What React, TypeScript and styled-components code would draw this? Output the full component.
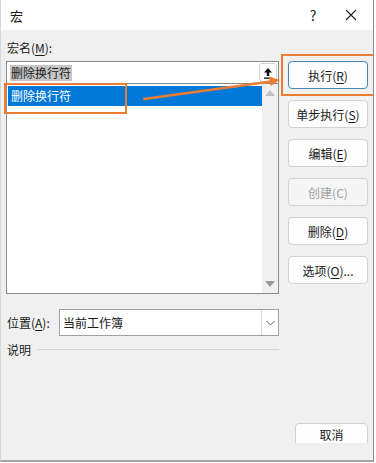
import React from "react";
import styled, { createGlobalStyle } from "styled-components";

const Global = createGlobalStyle`
  html, body { margin: 0; padding: 0; background: #ffffff; }
  body { font-family: "Noto Sans CJK SC", "Noto Sans", sans-serif; font-size: 12px; color: #1a1a1a; }
  * { box-sizing: border-box; }
`;

const Window = styled.div`
  position: relative;
  width: 374px;
  height: 462px;
  background: #f0f0f0;
  border-left: 1px solid #d8d8d8;
  border-right: 1px solid #8c8c8c;
  border-bottom: 2px solid #a6a6a6;
  overflow: hidden;
  display: flex;
  flex-direction: column;
`;

const TitleBar = styled.div`
  height: 30px;
  background: #ffffff;
  display: flex;
  align-items: center;
  padding-left: 9px;
  font-size: 13px;
`;

const Title = styled.div`
  flex: 1;
`;

const TitleButton = styled.div<{ $w: number }>`
  width: ${(p) => p.$w}px;
  display: flex;
  justify-content: center;
  align-items: center;
  font-size: 14px;
  color: #222;
`;

const Body = styled.div`
  flex: 1;
  display: flex;
  padding: 10px 0 0 5px;
`;

const LeftCol = styled.div`
  width: 273px;
  display: flex;
  flex-direction: column;
`;

const Label = styled.div`
  height: 16px;
  line-height: 16px;
  padding-left: 1px;
  font-size: 12px;
`;

const U = styled.span`
  text-decoration: underline;
  text-underline-offset: 2px;
`;

const NameBox = styled.div`
  margin-top: 5px;
  height: 22px;
  background: #fff;
  border: 1px solid #8a8a8a;
  border-bottom: none;
  display: flex;
  align-items: center;
  padding-left: 3px;
`;

const Selected = styled.span`
  line-height: 16px;
  flex: 1;
  display: flex;
`;

const SelText = styled.span`
  background: #c6c6c6;
  padding: 0 1px;
`;

const UpButton = styled.div`
  width: 18px;
  height: 19px;
  margin-right: 1px;
  border: 1px solid #d4d4d4;
  border-radius: 3px;
  background: #fdfdfd;
  display: flex;
  align-items: center;
  justify-content: center;
`;

const ListBox = styled.div`
  height: 211px;
  background: #fff;
  border: 1px solid #8a8a8a;
  display: flex;
`;

const ListItems = styled.div`
  flex: 1;
  padding: 2px 0 0 1px;
`;

const Item = styled.div<{ $sel?: boolean }>`
  height: 20px;
  line-height: 20px;
  padding-left: 3px;
  background: ${(p) => (p.$sel ? "#0078d7" : "transparent")};
  color: ${(p) => (p.$sel ? "#fff" : "#1a1a1a")};
`;

const ScrollBar = styled.div`
  width: 16px;
  background: #f0f0f0;
  display: flex;
  flex-direction: column;
  justify-content: space-between;
  align-items: center;
  padding: 6px 0 6px;
`;

const Tri = styled.div<{ $down?: boolean }>`
  width: 0;
  height: 0;
  border-left: 5px solid transparent;
  border-right: 5px solid transparent;
  ${(p) =>
    p.$down ? "border-top: 6px solid #9a9a9a;" : "border-bottom: 6px solid #c2c2c2;"}
`;

const PosRow = styled.div`
  margin-top: 15px;
  display: flex;
  align-items: center;
`;

const PosLabel = styled.div`
  width: 53px;
  padding-left: 1px;
`;

const Combo = styled.div`
  flex: 1;
  height: 27px;
  background: #fff;
  border: 1px solid #a0a0a0;
  display: flex;
  align-items: center;
`;

const ComboText = styled.div`
  flex: 1;
  padding-left: 3px;
`;

const ComboArrow = styled.div`
  width: 17px;
  height: 100%;
  border-left: 1px solid #dcdcdc;
  display: flex;
  align-items: center;
  justify-content: center;
`;

const DescRow = styled.div`
  margin-top: 5px;
  display: flex;
  align-items: center;
  gap: 6px;
  padding-left: 1px;
`;

const Rule = styled.div`
  flex: 1;
  height: 1px;
  background: #d6d6d6;
`;

const RightCol = styled.div`
  margin-left: 9px;
  width: 80px;
  display: flex;
  flex-direction: column;
  padding-top: 21px;
  gap: 11px;
`;

const Btn = styled.div<{ $default?: boolean; $disabled?: boolean }>`
  height: 28px;
  border-radius: 4px;
  border: 1px solid ${(p) => (p.$default ? "#4a86b4" : "#d2d2d2")};
  background: ${(p) => (p.$disabled ? "#f5f5f5" : "#fdfdfd")};
  color: ${(p) => (p.$disabled ? "#a2a2a2" : "#1a1a1a")};
  display: flex;
  align-items: center;
  justify-content: center;
  font-size: 12px;
`;

const Spacer = styled.div`
  flex: 1;
`;

const CancelWrap = styled.div`
  height: 20px;
  margin: 0 0 17px 7px;
  width: 73px;
  overflow: hidden;
`;

const CancelBtn = styled.div`
  height: 28px;
  border-radius: 4px;
  border: 1px solid #d2d2d2;
  background: #fdfdfd;
  display: flex;
  align-items: center;
  justify-content: center;
  padding-bottom: 6px;
  font-size: 12px;
`;

const OrangeBox = styled.div<{ $x: number; $y: number; $w: number; $h: number }>`
  position: absolute;
  left: ${(p) => p.$x}px;
  top: ${(p) => p.$y}px;
  width: ${(p) => p.$w}px;
  height: ${(p) => p.$h}px;
  border: 2px solid #ed7d31;
  pointer-events: none;
`;

const Overlay = styled.svg`
  position: absolute;
  left: 0;
  top: 0;
  pointer-events: none;
`;

export default function App() {
  return (
    <>
      <Global />
      <Window>
        <TitleBar>
          <Title>宏</Title>
          <TitleButton $w={30}>?</TitleButton>
          <TitleButton $w={45}>
            <svg width="12" height="12" viewBox="0 0 12 12">
              <path d="M1 1 L11 11 M11 1 L1 11" stroke="#222" strokeWidth="1.1" />
            </svg>
          </TitleButton>
        </TitleBar>
        <Body>
          <LeftCol>
            <Label>
              宏名(<U>M</U>):
            </Label>
            <NameBox>
              <Selected>
                <SelText>删除换行符</SelText>
              </Selected>
              <UpButton>
                <svg width="10" height="12" viewBox="0 0 10 12">
                  <path d="M5 1 L9 5.5 H6.2 V9 H3.8 V5.5 H1 Z" fill="#111" />
                  <rect x="1" y="10.5" width="8" height="1.3" fill="#111" />
                </svg>
              </UpButton>
            </NameBox>
            <ListBox>
              <ListItems>
                <Item $sel>删除换行符</Item>
              </ListItems>
              <ScrollBar>
                <Tri />
                <Tri $down />
              </ScrollBar>
            </ListBox>
            <PosRow>
              <PosLabel>
                位置(<U>A</U>):
              </PosLabel>
              <Combo>
                <ComboText>当前工作簿</ComboText>
                <ComboArrow>
                  <svg width="9" height="6" viewBox="0 0 9 6">
                    <path d="M0.5 1 L4.5 5 L8.5 1" stroke="#555" fill="none" strokeWidth="1" />
                  </svg>
                </ComboArrow>
              </Combo>
            </PosRow>
            <DescRow>
              说明
              <Rule />
            </DescRow>
          </LeftCol>
          <RightCol>
            <Btn $default>
              执行(<U>R</U>)
            </Btn>
            <Btn>
              单步执行(<U>S</U>)
            </Btn>
            <Btn>
              编辑(<U>E</U>)
            </Btn>
            <Btn $disabled>创建(C)</Btn>
            <Btn>
              删除(<U>D</U>)
            </Btn>
            <Btn>
              选项(<U>O</U>)...
            </Btn>
            <Spacer />
            <CancelWrap>
              <CancelBtn>取消</CancelBtn>
            </CancelWrap>
          </RightCol>
        </Body>
        <OrangeBox $x={3} $y={83} $w={123} $h={31} />
        <OrangeBox $x={280} $y={54} $w={94} $h={42} />
        <Overlay width="376" height="463" viewBox="0 0 376 463">
          <line x1="143" y1="99" x2="270" y2="81.5" stroke="#ed7d31" strokeWidth="2.5" strokeLinecap="round" />
          <path d="M279 80 L268 76.5 L269.5 86 Z" fill="#ed7d31" />
        </Overlay>
      </Window>
    </>
  );
}
